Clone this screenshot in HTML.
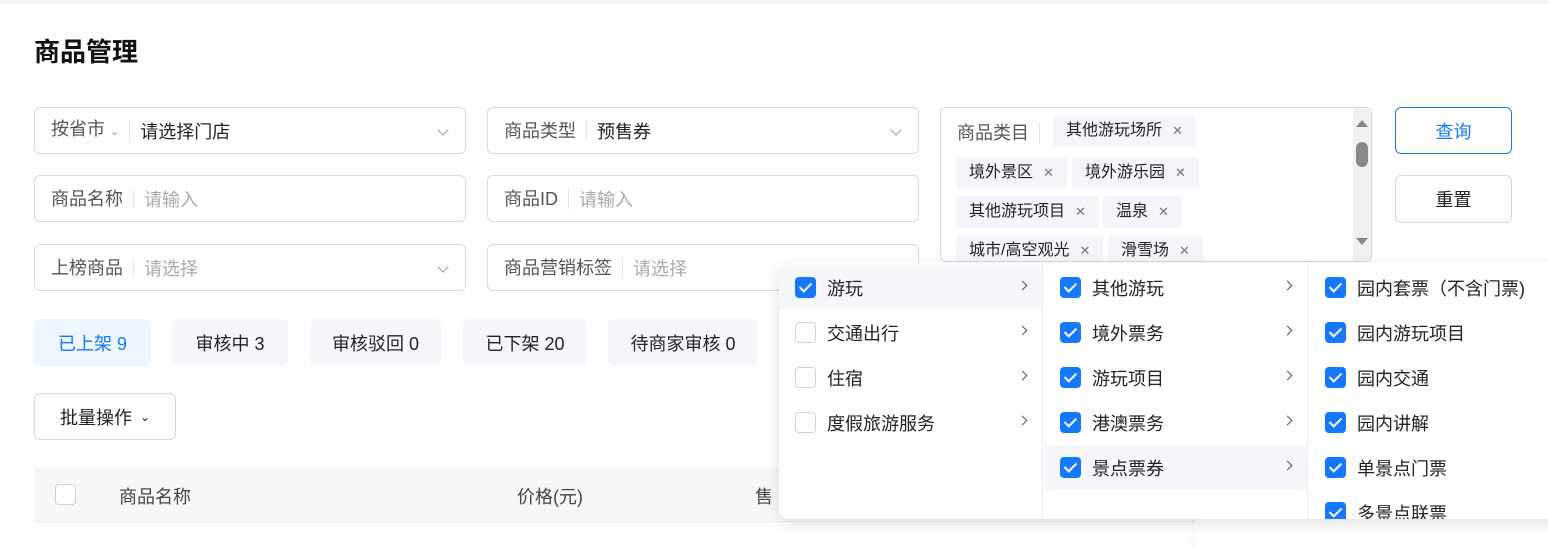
<!DOCTYPE html>
<html><head><meta charset="utf-8"><style>
*{box-sizing:border-box;margin:0;padding:0}
body{width:1548px;height:548px;overflow:hidden;background:#fff;font-family:"Liberation Sans","Noto Sans CJK SC",sans-serif;color:#222;position:relative;font-size:18px}
.a{position:absolute}
.topline{left:0;top:0;width:1548px;height:4px;background:#f2f3f5}
h1{position:absolute;left:34px;top:32px;font-size:26px;font-weight:bold;color:#111}
.in{position:absolute;border:1px solid #d9dbe0;border-radius:6px;height:47px;display:flex;align-items:center;padding-left:16px;font-size:18px}
.lab{color:#555;padding-right:10px;border-right:1px solid #e2e4e8;line-height:20px;margin-right:10px}
.ph{color:#aaa}
.chev{position:absolute;right:18px;top:18px;width:8px;height:8px;border-right:1.5px solid #999;border-bottom:1.5px solid #999;transform:rotate(45deg)}
.tag{position:absolute;background:#f4f6f9;border-radius:4px;height:32px;line-height:32px;padding:0 13px;font-size:16px;color:#222}
.tag b{font-weight:normal;color:#777;margin-left:10px;font-size:13px}
.btn{position:absolute;border:1px solid #d5d8de;border-radius:6px;display:flex;align-items:center;justify-content:center;font-size:18px}
.tab{position:absolute;top:319px;height:47px;background:#f6f7fa;border-radius:6px;display:flex;align-items:center;justify-content:center;font-size:18px;color:#222}
.dd{position:absolute;left:779px;top:263px;width:800px;height:256px;background:#fff;border-radius:10px;box-shadow:0 4px 16px rgba(0,0,0,.12);overflow:hidden}
.col{position:absolute;top:0;height:256px}
.it{position:absolute;left:0;height:45px;width:100%;display:flex;align-items:center;font-size:18px;color:#222}
.cb{width:21px;height:21px;border-radius:4px;margin-left:16px;margin-right:11px;flex:none}
.on{background:#1677ff;position:relative}
.on:after{content:"";position:absolute;left:7px;top:3px;width:5px;height:10px;border-right:2px solid #fff;border-bottom:2px solid #fff;transform:rotate(45deg)}
.off{border:1px solid #cfd2d8;background:#fff}
.ar{position:absolute;right:16px;top:17px;width:7px;height:7px;border-right:1.5px solid #555;border-top:1.5px solid #555;transform:rotate(45deg)}
</style></head><body>
<div class="a topline"></div>
<h1>商品管理</h1>

<div class="in" style="left:34px;top:107px;width:432px"><span class="lab" style="color:#555">按省市 <span style="font-size:11px;color:#999">⌄</span></span><span>请选择门店</span><div class="chev"></div></div>
<div class="in" style="left:487px;top:107px;width:432px"><span class="lab">商品类型</span><span>预售券</span><div class="chev"></div></div>
<div class="in" style="left:34px;top:175px;width:432px"><span class="lab">商品名称</span><span class="ph">请输入</span></div>
<div class="in" style="left:487px;top:175px;width:432px"><span class="lab">商品ID</span><span class="ph">请输入</span></div>
<div class="in" style="left:34px;top:244px;width:432px"><span class="lab">上榜商品</span><span class="ph">请选择</span><div class="chev"></div></div>
<div class="in" style="left:487px;top:244px;width:432px"><span class="lab">商品营销标签</span><span class="ph">请选择</span></div>

<div class="a" style="left:940px;top:107px;width:432px;height:155px;border:1px solid #d9dbe0;border-radius:6px;overflow:hidden">
<div class="a" style="left:16px;top:14px;font-size:18px;color:#555;padding-right:10px;border-right:1px solid #e2e4e8;line-height:22px">商品类目</div>
<div class="tag" style="left:112px;top:7px">其他游玩场所<b>✕</b></div>
<div class="tag" style="left:15px;top:49px">境外景区<b>✕</b></div>
<div class="tag" style="left:131px;top:49px">境外游乐园<b>✕</b></div>
<div class="tag" style="left:15px;top:88px">其他游玩项目<b>✕</b></div>
<div class="tag" style="left:162px;top:88px">温泉<b>✕</b></div>
<div class="tag" style="left:15px;top:127px">城市/高空观光<b>✕</b></div>
<div class="tag" style="left:167px;top:127px">滑雪场<b>✕</b></div>
<div class="a" style="left:412px;top:0;width:19px;height:155px;background:#f1f1f1"></div>
<div class="a" style="left:415px;top:12px;border:6px solid transparent;border-bottom:7px solid #888;border-top:0"></div>
<div class="a" style="left:415px;top:34px;width:12px;height:25px;background:#888;border-radius:6px"></div>
<div class="a" style="left:415px;top:130px;border:6px solid transparent;border-top:7px solid #888;border-bottom:0"></div>
</div>

<div class="btn" style="left:1395px;top:107px;width:117px;height:47px;border-color:#1677ff;color:#1677ff">查询</div>
<div class="btn" style="left:1395px;top:175px;width:117px;height:48px">重置</div>

<div class="tab" style="left:34px;width:117px;background:#eef7ff;color:#1677ff">已上架 9</div>
<div class="tab" style="left:172px;width:116px">审核中 3</div>
<div class="tab" style="left:310px;width:131px">审核驳回 0</div>
<div class="tab" style="left:463px;width:124px">已下架 20</div>
<div class="tab" style="left:608px;width:150px">待商家审核 0</div>

<div class="btn" style="left:34px;top:393px;width:142px;height:47px">批量操作 <span style="font-size:12px;margin-left:8px">⌄</span></div>

<div class="a" style="left:34px;top:467px;width:1200px;height:55px;background:#f7f8fa;border-bottom:1px solid #eceef2"></div>
<div class="a" style="left:55px;top:484px;width:21px;height:21px;border:1px solid #d0d3d9;border-radius:4px;background:#fff"></div>
<div class="a" style="left:119px;top:483px;color:#444">商品名称</div>
<div class="a" style="left:517px;top:483px;color:#444">价格(元)</div>
<div class="a" style="left:755px;top:483px;color:#444">售</div>
<div class="a" style="left:1195px;top:519px;width:353px;height:29px;background:#fff;box-shadow:0 2px 8px rgba(0,0,0,.06)"></div>

<div class="dd">
<div class="col" style="left:0;width:264px;border-right:1px solid #eceef2">
<div class="it" style="top:2px;background:#f6f7fa"><span class="cb on"></span>游玩<i class="ar"></i></div>
<div class="it" style="top:47px"><span class="cb off"></span>交通出行<i class="ar"></i></div>
<div class="it" style="top:92px"><span class="cb off"></span>住宿<i class="ar"></i></div>
<div class="it" style="top:137px"><span class="cb off"></span>度假旅游服务<i class="ar"></i></div>
</div>
<div class="col" style="left:265px;width:264px;border-right:1px solid #eceef2">
<div class="it" style="top:2px"><span class="cb on"></span>其他游玩<i class="ar"></i></div>
<div class="it" style="top:47px"><span class="cb on"></span>境外票务<i class="ar"></i></div>
<div class="it" style="top:92px"><span class="cb on"></span>游玩项目<i class="ar"></i></div>
<div class="it" style="top:137px"><span class="cb on"></span>港澳票务<i class="ar"></i></div>
<div class="it" style="top:182px;background:#f6f7fa"><span class="cb on"></span>景点票券<i class="ar"></i></div>
</div>
<div class="col" style="left:530px;width:270px">
<div class="it" style="top:2px"><span class="cb on"></span>园内套票（不含门票)</div>
<div class="it" style="top:47px"><span class="cb on"></span>园内游玩项目</div>
<div class="it" style="top:92px"><span class="cb on"></span>园内交通</div>
<div class="it" style="top:137px"><span class="cb on"></span>园内讲解</div>
<div class="it" style="top:182px"><span class="cb on"></span>单景点门票</div>
<div class="it" style="top:227px"><span class="cb on"></span>多景点联票</div>
</div>
</div>
</body></html>
